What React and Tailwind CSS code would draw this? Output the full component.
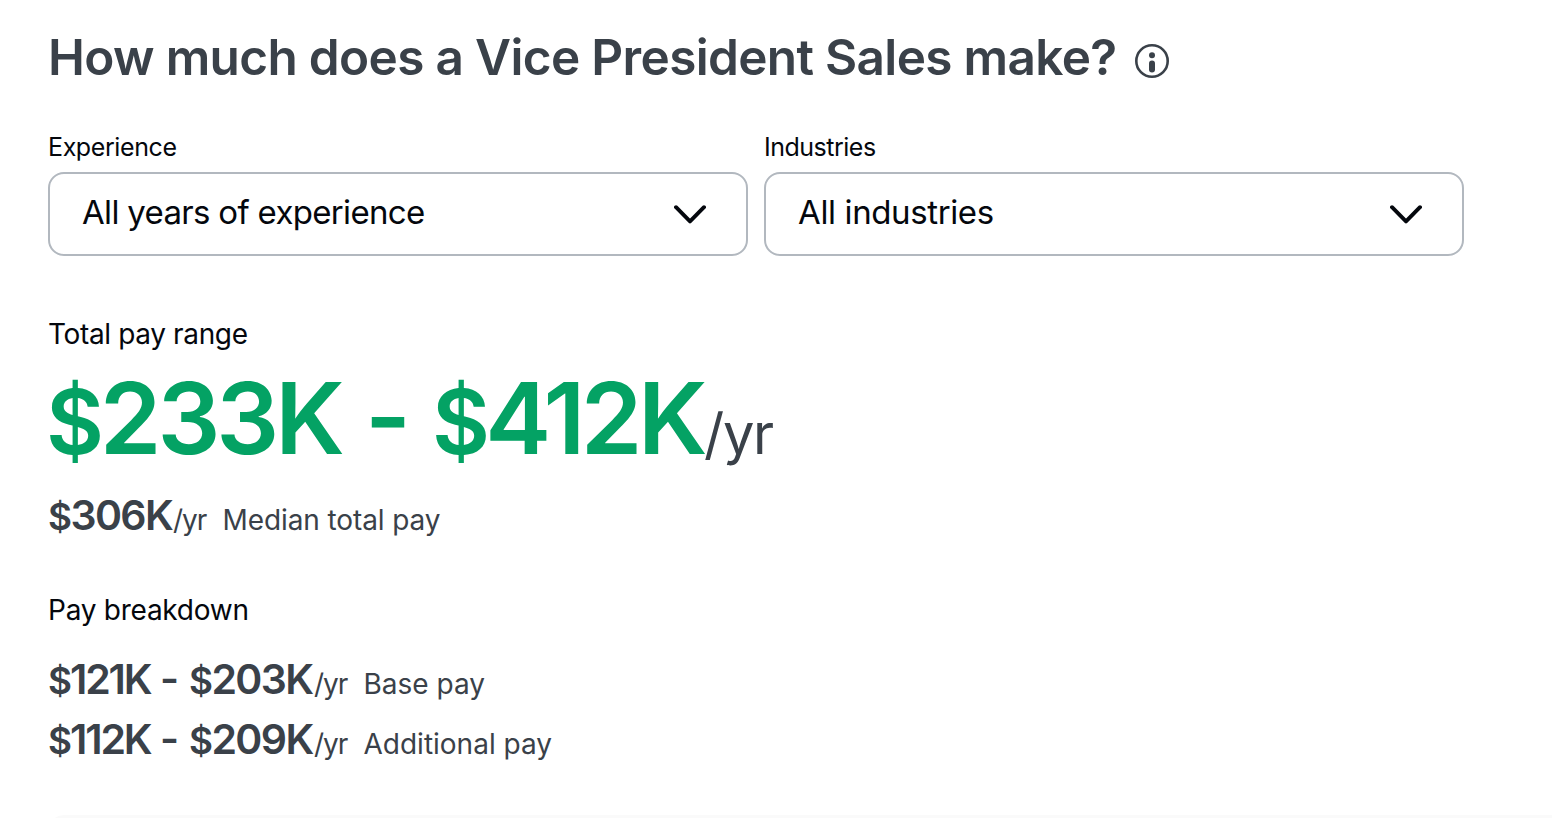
const filters = [
  { label: 'Experience', value: 'All years of experience', labelClass: 'tracking-[-0.4px]', valueClass: 'tracking-[-0.68px]' },
  { label: 'Industries', value: 'All industries', labelClass: 'tracking-[-0.5px]', valueClass: 'tracking-[-0.38px]' },
];

const breakdown = [
  { low: '121K', high: '203K', label: 'Base pay' },
  { low: '112K', high: '209K', label: 'Additional pay' },
];

function InfoIcon() {
  return (
    <svg width="34" height="34" viewBox="0 0 34 34" fill="none" className="shrink-0">
      <circle cx="17" cy="17" r="15.7" stroke="currentColor" strokeWidth="2.6" />
      <circle cx="17" cy="11.2" r="3" fill="currentColor" />
      <rect x="14" y="16.6" width="6" height="12" rx="3" fill="currentColor" />
    </svg>
  );
}

function Chevron() {
  return (
    <svg width="32" height="20" viewBox="0 0 32 20" fill="none" className="shrink-0">
      <path d="M2 3.2L16 17.4L30 3.2" stroke="currentColor" strokeWidth="3.9" strokeLinecap="round" strokeLinejoin="round" />
    </svg>
  );
}

// The dollar sign is set slightly smaller than the figures
function Amount({ value, className }) {
  return (
    <span className={`font-semibold ${className}`}>
      <span className="text-[0.9em]">$</span>
      {value}
    </span>
  );
}

export default function App() {
  return (
    <div className="flex h-[818px] flex-col overflow-hidden bg-white pt-6 pl-12 font-['Inter',sans-serif] text-[#3a4149]">
      {/* Heading */}
      <div className="flex h-16 items-center">
        <h1 className="w-[1087px] pt-px text-[49.5px] leading-16 font-semibold tracking-[-0.66px] whitespace-nowrap">
          How much does a Vice President Sales make?
        </h1>
        <div className="pt-2.5">
          <InfoIcon />
        </div>
      </div>

      {/* Filters */}
      <div className="mt-[43px] flex gap-4 text-[#04070d]">
        {filters.map(({ label, value, labelClass, valueClass }) => (
          <div key={label} className="w-[700px]">
            <div className={`text-[25px] leading-8 ${labelClass}`}>{label}</div>
            <button className="mt-[9px] flex h-[84px] w-full items-center justify-between rounded-2xl border-2 border-[#b2b8bf] pr-10 pb-1 pl-8">
              <span className={`text-[33px] leading-10 ${valueClass}`}>{value}</span>
              <span className="pt-1">
                <Chevron />
              </span>
            </button>
          </div>
        ))}
      </div>

      {/* Total pay */}
      <h2 className="mt-[58px] text-[28px] leading-10 tracking-[-0.36px] text-[#04070d]">Total pay range</h2>
      <div className="mt-1 -ml-0.5 flex h-[120px] items-baseline leading-[120px] whitespace-nowrap">
        <Amount value="233K" className="w-[319px] text-[99px] tracking-[-4.1px] text-[#04a264]" />
        <span className="w-[67px] -translate-y-0.5 text-[99px] font-semibold text-[#04a264]">-</span>
        <Amount value="412K" className="w-[272px] text-[99px] tracking-[-4.6px] text-[#04a264]" />
        <span className="text-[56px] tracking-[-1.3px]">/yr</span>
      </div>
      <div className="mt-[7px] flex h-[60px] items-baseline leading-[60px] whitespace-nowrap">
        <Amount value="306K" className="w-[125px] text-[41px] tracking-[-1.6px]" />
        <span className="w-[49.5px] text-[28px] tracking-[-1px]">/yr</span>
        <span className="text-[28px] tracking-[-0.1px]">Median total pay</span>
      </div>

      {/* Breakdown */}
      <h2 className="mt-[45px] text-[28px] leading-10 tracking-[-0.25px] text-[#04070d]">Pay breakdown</h2>
      <div className="mt-[19px]">
        {breakdown.map(({ low, high, label }) => (
          <div key={label} className="flex h-[60px] items-baseline leading-[60px] whitespace-nowrap">
            <Amount value={low} className="w-[112px] text-[41px] tracking-[-2.1px]" />
            <span className="w-[29px] -translate-y-px text-[41px] font-semibold">-</span>
            <Amount value={high} className="w-[125px] text-[41px] tracking-[-1.6px]" />
            <span className="w-[49.5px] text-[28px] tracking-[-1px]">/yr</span>
            <span className="text-[28px]">{label}</span>
          </div>
        ))}
      </div>

      {/* Next section edge */}
      <div className="mt-[46px] h-10 shrink-0 rounded-tl-2xl bg-[#fafafa]" />
    </div>
  );
}
